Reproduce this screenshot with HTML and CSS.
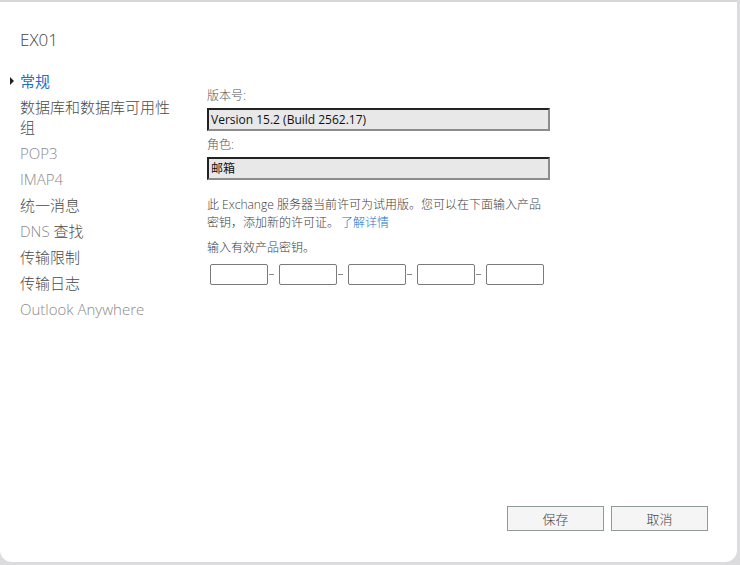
FILE: index.html
```html
<!DOCTYPE html>
<html>

<head>
    <title>EX01</title>
    <meta charset="utf-8">
    <meta name="viewport" content="width=device-width, initial-scale=1.0">
    <link rel="stylesheet" href="styles.css">
</head>

<body>
    <div class="vindue">
        <h1 class="titel">EX01</h1>

        <div class="hoved">
            <nav class="menu">
                <a class="punkt valgt">常规</a>
                <a class="punkt">数据库和数据库可用性组</a>
                <a class="punkt lys">POP3</a>
                <a class="punkt lys">IMAP4</a>
                <a class="punkt">统一消息</a>
                <a class="punkt"><span class="lys">DNS</span> 查找</a>
                <a class="punkt">传输限制</a>
                <a class="punkt">传输日志</a>
                <a class="punkt lys">Outlook Anywhere</a>
            </nav>

            <section class="indhold">
                <label class="etiket">版本号:</label>
                <div class="felt">Version 15.2 (Build 2562.17)</div>

                <label class="etiket">角色:</label>
                <div class="felt">邮箱</div>

                <p class="tekst">此 Exchange 服务器当前许可为试用版。您可以在下面输入产品密钥，添加新的许可证。<a class="link">了解详情</a></p>

                <p class="tekst kort">输入有效产品密钥。</p>

                <div class="noegler">
                    <input class="noegle" type="text">
                    <span class="streg"></span>
                    <input class="noegle" type="text">
                    <span class="streg"></span>
                    <input class="noegle" type="text">
                    <span class="streg"></span>
                    <input class="noegle" type="text">
                    <span class="streg"></span>
                    <input class="noegle" type="text">
                </div>
            </section>
        </div>

        <footer class="knapper">
            <button class="knap">保存</button>
            <button class="knap">取消</button>
        </footer>
    </div>
</body>

</html>
```
FILE: styles.css
```css
body {
    margin: 0;
    background-color: #dcdcde;
    font-family: "Open Sans", "Noto Sans CJK SC", sans-serif;
    color: #333;
}

.vindue {
    width: 737px;
    height: 562px;
    background: #fff;
    border-top: 2px solid #d6d6da;
    border-radius: 0 0 12px 12px;
    display: flex;
    flex-direction: column;
    box-sizing: border-box;
}

.titel {
    margin: 27px 0 0 20px;
    font-size: 17px;
    font-weight: 300;
    color: #444;
    line-height: 22px;
}

.hoved {
    display: flex;
    flex: 1;
    margin-top: 20px;
}

.menu {
    width: 153px;
    padding-left: 20px;
    display: flex;
    flex-direction: column;
    gap: 6px;
}

.punkt {
    font-size: 15px;
    line-height: 20px;
    color: #4a4a4a;
    font-weight: 300;
    position: relative;
}

.lys {
    color: #8a8a8a;
    font-weight: 300;
}

.valgt {
    color: #1f6fc2;
    font-weight: 400;
}

/* lille pil foran valgt punkt */
.valgt::before {
    content: "";
    position: absolute;
    left: -10px;
    top: 6px;
    border-left: 4px solid #222;
    border-top: 4px solid transparent;
    border-bottom: 4px solid transparent;
}

.indhold {
    margin-left: 34px;
    width: 343px;
    padding-top: 17px;
}

.etiket {
    display: block;
    font-size: 12px;
    line-height: 16px;
    color: #555;
    font-weight: 300;
    margin-bottom: 4px;
}

.felt {
    height: 19px;
    border-top: 2px solid #222;
    border-left: 2px solid #222;
    border-right: 2px solid #8c8c8c;
    border-bottom: 2px solid #8c8c8c;
    background: #e8e8e8;
    font-size: 12px;
    line-height: 19px;
    padding-left: 2px;
    color: #111;
    margin-bottom: 6px;
}

.tekst {
    font-size: 12px;
    line-height: 18px;
    color: #3c3c3c;
    font-weight: 300;
    margin: 16px 0 0 0;
}

.kort {
    margin-top: 7px;
}

.link {
    display: inline-block;
    color: #1a73c8;
    margin-left: 2px;
}

.noegler {
    display: flex;
    align-items: center;
    margin-top: 7px;
    padding-left: 3px;
}

.noegle {
    width: 58px;
    height: 21px;
    box-sizing: border-box;
    border: 1px solid #7a7a7a;
    border-radius: 2px;
    margin: 0;
    padding: 0;
}

/* streg mellem felterne */
.streg {
    width: 11px;
    height: 1px;
    display: flex;
}

.streg::before {
    content: "";
    width: 5px;
    height: 1px;
    margin-left: 1px;
    background: #888;
}

.knapper {
    display: flex;
    justify-content: flex-end;
    gap: 7px;
    padding: 0 29px 31px 0;
}

.knap {
    width: 97px;
    height: 25px;
    border: 1px solid #8e9b9b;
    background: #f5f5f5;
    font-family: "Noto Sans CJK SC", sans-serif;
    font-size: 13px;
    font-weight: 300;
    color: #444;
    border-radius: 0;
}
```
